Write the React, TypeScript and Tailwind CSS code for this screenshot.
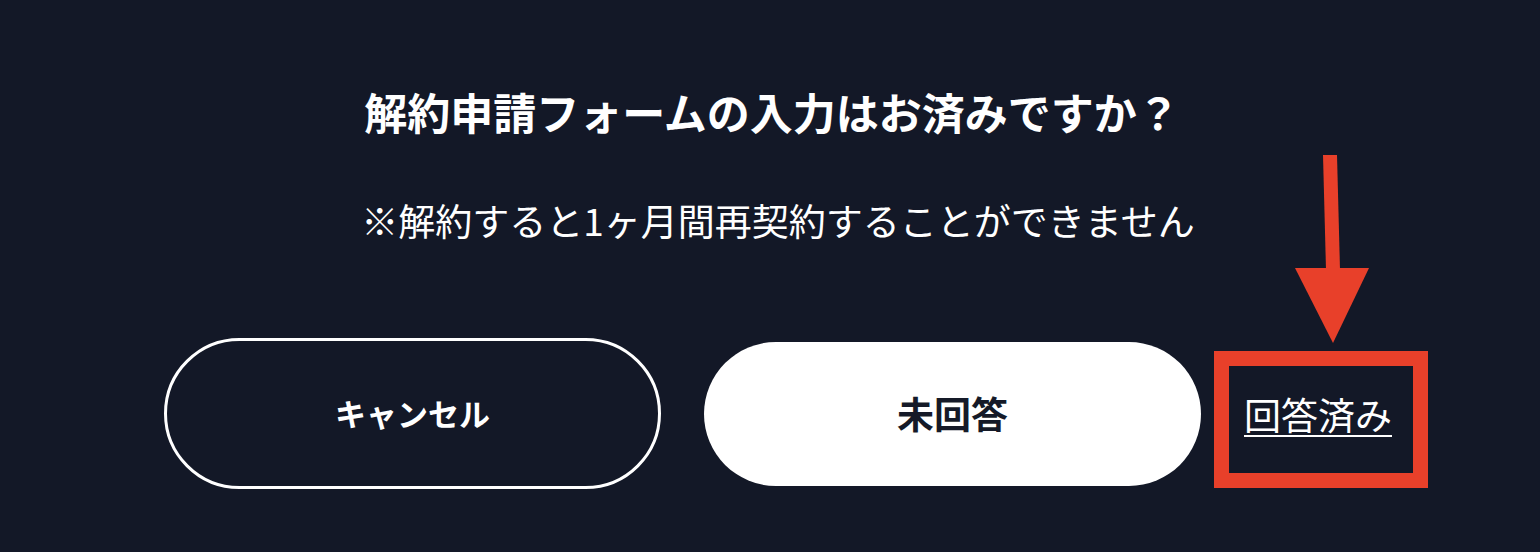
export default function App() {
  return (
    <div
      className="relative flex h-[552px] w-[1540px] flex-col items-center bg-[#131827] pl-[16px] pt-[80px] text-white"
      style={{ fontFamily: '"Noto Sans CJK JP", "Noto Sans", sans-serif' }}
    >
      <h2 className="pr-[12px] text-[43px] font-bold leading-[62px]">
        解約申請フォームの入力はお済みですか？
      </h2>
      <p className="mt-[51px] text-[37px] leading-[54px]">
        ※解約すると1ヶ月間再契約することができません
      </p>

      <div className="mt-[91px] flex items-center gap-[43px]">
        <button className="flex h-[151px] w-[497px] items-center justify-center rounded-full border-[3px] border-white text-[31px] font-bold">
          キャンセル
        </button>
        <button className="flex h-[144px] w-[497px] items-center justify-center rounded-full bg-white text-[37px] font-bold text-[#151a28]">
          未回答
        </button>
        <a className="text-[37px] leading-[54px] underline decoration-2 underline-offset-[5px]">
          回答済み
        </a>
      </div>

      {/* annotation overlay */}
      <div className="absolute left-[1214px] top-[351px] h-[137px] w-[214px] border-[15px] border-[#e8402a]" />
      <svg
        className="absolute left-[1290px] top-[150px]"
        width="82"
        height="196"
        viewBox="1290 150 82 196"
      >
        <polygon points="1323,155 1337,155 1340,270 1326,270" fill="#e8402a" />
        <polygon points="1295,268 1369,268 1333,343" fill="#e8402a" />
      </svg>
    </div>
  );
}
